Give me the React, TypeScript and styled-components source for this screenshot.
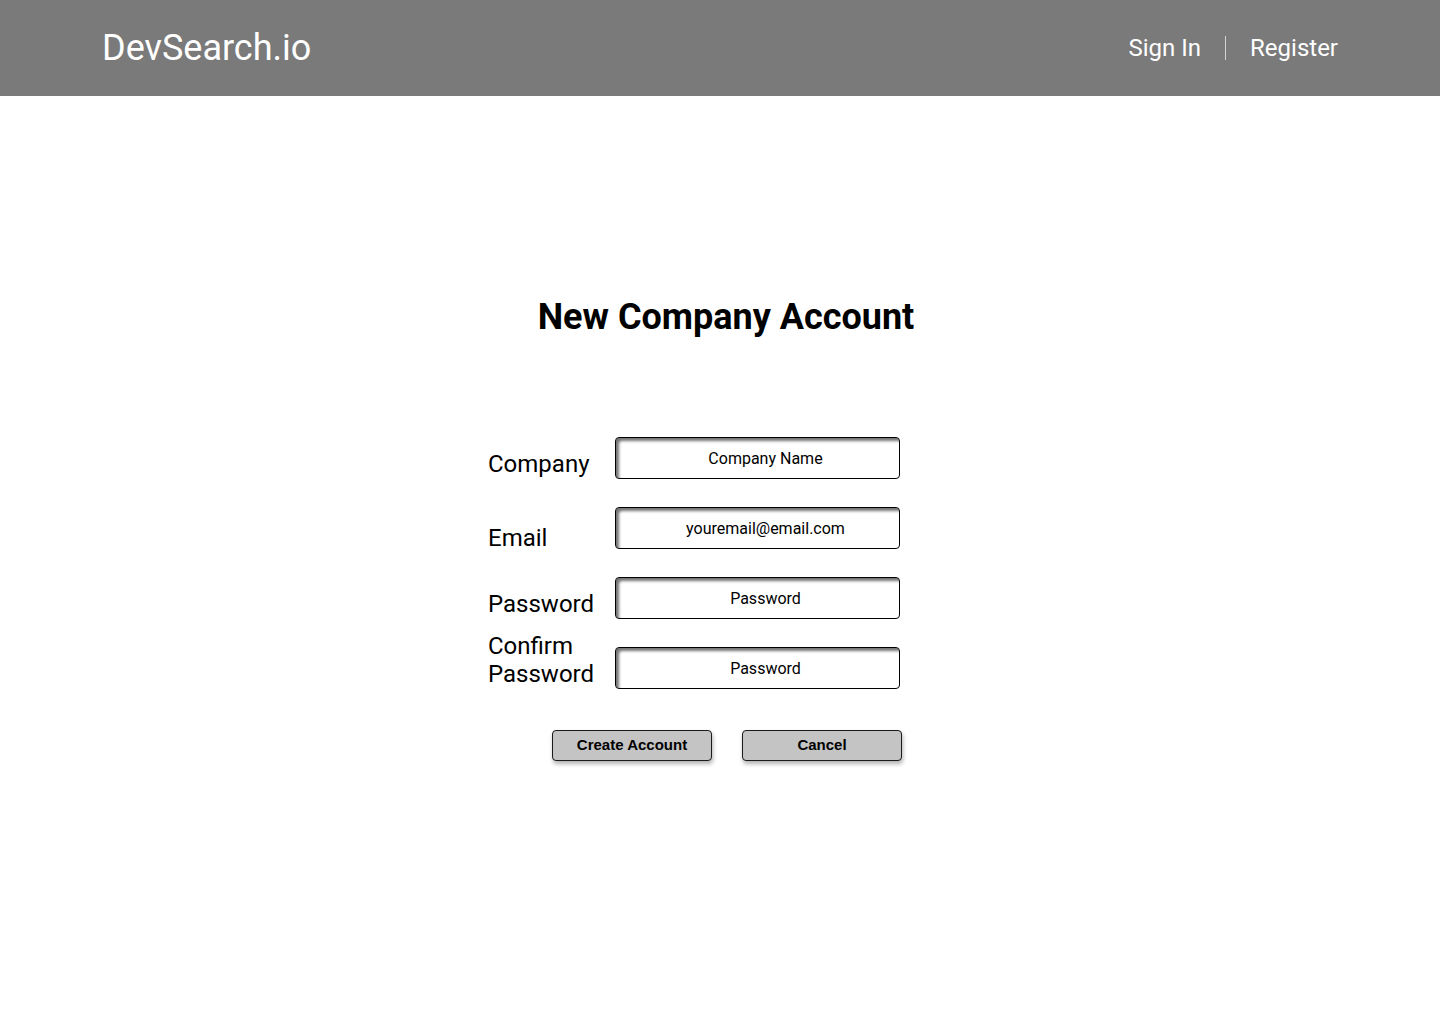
import React from "react";
import styled, { createGlobalStyle } from "styled-components";

const Global = createGlobalStyle`
  html, body { margin: 0; padding: 0; background: #ffffff; }
  body { font-family: Roboto, "Liberation Sans", Arial, sans-serif; }
  * { box-sizing: border-box; }
`;

const Page = styled.div`
  width: 1440px;
  min-height: 1024px;
  background: #ffffff;
`;

const Header = styled.header`
  height: 96px;
  background: #7a7a7a;
  display: flex;
  align-items: center;
  justify-content: space-between;
  padding: 0 102px 0 102px;
  color: #ffffff;
`;

const Logo = styled.div`
  font-size: 36px;
  font-weight: 400;
  line-height: 1;
`;

const Nav = styled.nav`
  display: flex;
  align-items: center;
  gap: 24px;
  font-size: 24px;
  line-height: 1;
`;

const NavLink = styled.a`
  color: #ffffff;
  text-decoration: none;
`;

const Divider = styled.span`
  width: 1px;
  height: 24px;
  background: #d4d4d4;
`;

const Main = styled.main`
  display: flex;
  flex-direction: column;
  align-items: center;
`;

const Title = styled.h1`
  margin: 199px 0 0 12px;
  font-size: 36px;
  font-weight: 700;
  line-height: 44px;
  color: #000000;
`;

const Form = styled.form`
  margin-top: 98px;
  margin-left: -50px;
  width: 414px;
  display: flex;
  flex-direction: column;
  gap: 28px;
`;

const Row = styled.div`
  display: flex;
  align-items: flex-start;
  height: 42px;
`;

const Label = styled.label<{ $offset: number }>`
  width: 127px;
  flex-shrink: 0;
  margin-top: ${(p) => p.$offset}px;
  font-size: 24px;
  line-height: 28px;
  color: #000000;
`;

const Input = styled.div`
  width: 285px;
  height: 42px;
  border: 1px solid #000000;
  border-radius: 4px;
  background: #ffffff;
  box-shadow: inset 3px 3px 3px rgba(0, 0, 0, 0.55);
  display: flex;
  align-items: center;
  justify-content: center;
  font-size: 16px;
  color: #000000;
  padding: 0 0 0 16px;
`;

const Buttons = styled.div`
  display: flex;
  gap: 30px;
  margin-top: 13px;
  padding-left: 64px;
`;

const Button = styled.button`
  width: 160px;
  height: 31px;
  background: #c4c4c4;
  border: 1px solid #1a1a1a;
  border-radius: 4px;
  box-shadow: 1px 3px 4px rgba(0, 0, 0, 0.3);
  font-family: "Liberation Sans", Arial, sans-serif;
  font-weight: 700;
  font-size: 15px;
  color: #000000;
  padding: 0 0 3px 0;
  cursor: pointer;
`;

export default function App() {
  return (
    <Page>
      <Global />
      <Header>
        <Logo>DevSearch.io</Logo>
        <Nav>
          <NavLink href="#">Sign In</NavLink>
          <Divider />
          <NavLink href="#">Register</NavLink>
        </Nav>
      </Header>
      <Main>
        <Title>New Company Account</Title>
        <Form onSubmit={(e) => e.preventDefault()}>
          <Row>
            <Label $offset={13}>Company</Label>
            <Input>Company Name</Input>
          </Row>
          <Row>
            <Label $offset={17}>Email</Label>
            <Input>youremail@email.com</Input>
          </Row>
          <Row>
            <Label $offset={13}>Password</Label>
            <Input>Password</Input>
          </Row>
          <Row>
            <Label $offset={-15}>Confirm Password</Label>
            <Input>Password</Input>
          </Row>
          <Buttons>
            <Button type="submit">Create Account</Button>
            <Button type="button">Cancel</Button>
          </Buttons>
        </Form>
      </Main>
    </Page>
  );
}
